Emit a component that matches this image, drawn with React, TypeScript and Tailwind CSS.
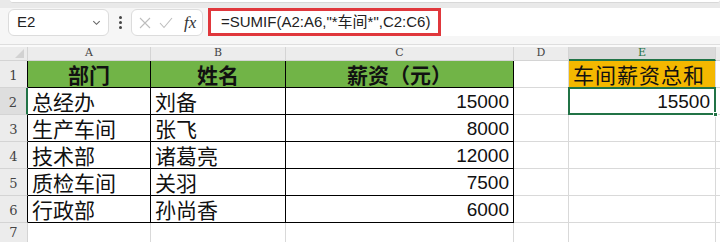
import React from 'react';

const COLS = ['A', 'B', 'C', 'D', 'E'];

const data: [string, string, number][] = [
  ['总经办', '刘备', 15000],
  ['生产车间', '张飞', 8000],
  ['技术部', '诸葛亮', 12000],
  ['质检车间', '关羽', 7500],
  ['行政部', '孙尚香', 6000],
];

const font = { fontFamily: '"Liberation Sans", "Noto Sans CJK SC", sans-serif' };

function FormulaBar() {
  return (
    <div className="h-[37px] bg-[#f6f6f6] border-b border-[#dedede] flex items-start">
      <div className="ml-[8px] mt-[1px] w-[101px] h-[27px] bg-white border border-[#dcdcdc] rounded-[6px] flex items-center justify-between pl-[8px] pr-[6px]">
        <span className="text-[15px] text-[#222]">E2</span>
        <svg width="11" height="11" viewBox="0 0 12 12" className="text-[#666]">
          <path d="M2.5 4.5 L6 8 L9.5 4.5" fill="none" stroke="currentColor" strokeWidth="1.2" />
        </svg>
      </div>
      <div className="w-[22px] h-[29px] flex flex-col items-center justify-center gap-[2px]">
        <span className="block w-[3px] h-[3px] rounded-full bg-[#444]" />
        <span className="block w-[3px] h-[3px] rounded-full bg-[#444]" />
        <span className="block w-[3px] h-[3px] rounded-full bg-[#444]" />
      </div>
      <div className="mt-[1px] w-[72px] h-[27px] bg-white border border-[#dcdcdc] rounded-[6px] flex items-center pl-[7px] gap-[8px]">
        <svg width="12" height="12" viewBox="0 0 12 12" className="text-[#bdbdbd]">
          <path d="M1 1 L11 11 M11 1 L1 11" stroke="currentColor" strokeWidth="1.1" />
        </svg>
        <svg width="14" height="12" viewBox="0 0 14 12" className="text-[#bdbdbd]">
          <path d="M1 6 L5 10.5 L13 1" fill="none" stroke="currentColor" strokeWidth="1.1" />
        </svg>
        <span className="italic text-[17px] text-[#333] ml-[3px]" style={{ fontFamily: '"Liberation Serif", serif' }}>
          fx
        </span>
      </div>
      <div className="ml-[5px] flex-1 h-[28px] bg-white flex items-start">
        <div className="w-[233px] h-[28px] border-[3px] border-[#e0373c] flex items-center pl-[10px]">
          <span className="text-[15px] text-[#222] whitespace-nowrap" style={font}>
            =SUMIF(A2:A6,"*车间*",C2:C6)
          </span>
        </div>
      </div>
    </div>
  );
}

function ColHeaders() {
  return (
    <>
      <div className="bg-[#ececec] border-r border-b border-[#d4d4d4] relative">
        <svg width="9" height="9" viewBox="0 0 9 9" className="absolute right-[3px] bottom-[2px]">
          <path d="M9 0 L9 9 L0 9 Z" fill="#d2d2d2" />
        </svg>
      </div>
      {COLS.map((c) => (
        <div
          key={c}
          className={
            c === 'E'
              ? 'bg-[#dadada] border-r border-[#d4d4d4] border-b-2 border-b-[#217346] flex items-center justify-center text-[#217346]'
              : 'bg-[#ececec] border-r border-b border-[#d4d4d4] flex items-center justify-center text-[#444]'
          }
          style={{ fontFamily: '"DejaVu Serif", serif', fontSize: 11 }}
        >
          {c}
        </div>
      ))}
      <div className="bg-[#ececec] border-b border-[#d4d4d4]" />
    </>
  );
}

function RowHeader({ n, active }: { n: number; active?: boolean }) {
  return (
    <div
      className={
        active
          ? 'bg-[#dedede] border-b border-[#d4d4d4] border-r-2 border-r-[#217346] flex items-end justify-center pb-[2px] text-[#444]'
          : 'bg-[#ececec] border-b border-[#d4d4d4] border-r border-r-black flex items-end justify-center pb-[2px] text-[#444]'
      }
      style={{ fontFamily: '"DejaVu Serif", serif', fontSize: 13 }}
    >
      {n}
    </div>
  );
}

export default function App() {
  return (
    <div className="w-[720px] h-[242px] overflow-hidden bg-white" style={font}>
      <div className="h-[8px] bg-[#e9e9e9] relative">
        <div className="absolute left-[10px] right-0 top-0 h-[3px] bg-white rounded-b-[6px] border-b border-[#d8d8d8]" />
      </div>
      <FormulaBar />
      <div className="h-[2px] bg-[#fafafa]" />
      <div className="grid grid-cols-[28px_123px_135px_228px_55px_147px_1fr] grid-rows-[14px_27px_27px_27px_27px_27px_27px_19px]">
        <ColHeaders />

        <RowHeader n={1} />
        {['部门', '姓名', '薪资（元）'].map((t) => (
          <div
            key={t}
            className="bg-[#71b447] border-r border-b border-black flex items-end justify-center pb-px text-[21px] leading-none font-bold text-[#111]"
          >
            {t}
          </div>
        ))}
        <div className="border-r border-b border-[#d9d9d9]" />
        <div className="bg-[#f4b800] border-r border-b border-[#d9d9d9] flex items-end pl-[4px] pb-px text-[21px] leading-none tracking-[1px] text-[#111]">
          车间薪资总和
        </div>
        <div className="border-b border-[#d9d9d9]" />

        {data.map(([dept, name, pay], i) => (
          <React.Fragment key={dept}>
            <RowHeader n={i + 2} active={i === 0} />
            <div className="border-r border-b border-black flex items-end pl-[4px] pb-px text-[21px] leading-none text-[#111]">
              {dept}
            </div>
            <div className="border-r border-b border-black flex items-end pl-[4px] pb-px text-[21px] leading-none text-[#111]">
              {name}
            </div>
            <div className="border-r border-b border-black flex items-end justify-end pr-[4px] pb-[3px] text-[19px] leading-none text-[#111]">
              {pay}
            </div>
            <div className="border-r border-b border-[#d9d9d9]" />
            {i === 0 ? (
              <div className="relative border-r border-b border-[#d9d9d9] flex items-end justify-end pr-[5px] pb-[3px] text-[19px] leading-none text-[#111]">
                15500
                <div className="absolute -left-px -top-px -right-px -bottom-px border-2 border-[#217346]" />
                <div className="absolute -right-[3px] -bottom-[3px] w-[5px] h-[5px] bg-[#217346] border border-white" />
              </div>
            ) : (
              <div className="border-r border-b border-[#d9d9d9]" />
            )}
            <div className="border-b border-[#d9d9d9]" />
          </React.Fragment>
        ))}

        <div
          className="bg-[#ececec] border-r border-[#d4d4d4] flex items-start justify-center pt-[3px] leading-none text-[#444]"
          style={{ fontFamily: '"DejaVu Serif", serif', fontSize: 13 }}
        >
          7
        </div>
        <div className="border-r border-[#d9d9d9]" />
        <div className="border-r border-[#d9d9d9]" />
        <div className="border-r border-[#d9d9d9]" />
        <div className="border-r border-[#d9d9d9]" />
        <div className="border-r border-[#d9d9d9]" />
        <div />
      </div>
    </div>
  );
}
